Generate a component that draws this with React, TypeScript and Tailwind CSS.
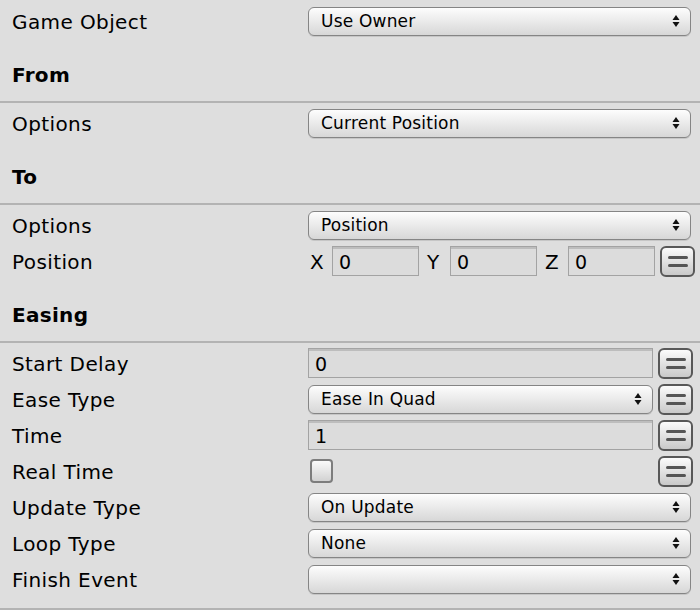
import React from 'react';

const FONT = { fontFamily: '"DejaVu Sans", "Liberation Sans", sans-serif' };

function Arrows() {
  return (
    <svg width="8" height="14" viewBox="0 0 8 14" className="shrink-0">
      <path d="M4 1 L7.5 6 L0.5 6 Z" fill="#111" />
      <path d="M4 13 L7.5 8 L0.5 8 Z" fill="#111" />
    </svg>
  );
}

function Dropdown({ value, className = 'w-[383px]' }: { value: string; className?: string }) {
  return (
    <div
      className={`${className} h-[29px] flex items-center justify-between pl-[12px] pr-[10px] rounded-[6px] border border-[#858585] bg-gradient-to-b from-[#fdfdfd] to-[#d7d7d7] shadow-[0_1px_0_#c6c6c6] text-[17px] text-black`}
    >
      <span className="leading-none pt-[1px] tracking-[0.2px]">{value}</span>
      <Arrows />
    </div>
  );
}

function Field({ value, className = 'w-[345px]' }: { value: string; className?: string }) {
  return (
    <div
      className={`${className} h-[30px] flex items-center pl-[6px] border border-[#a3a3a3] bg-[#dcdcdc] shadow-[inset_0_2px_0_#bdbdbd] text-[19px] text-black`}
    >
      <span className="leading-none pt-[2px]">{value}</span>
    </div>
  );
}

function EqButton() {
  return (
    <div className="w-[35px] h-[31px] ml-[5px] flex flex-col items-center justify-center gap-[5px] rounded-[6px] border-2 border-[#585858] bg-gradient-to-b from-[#fbfbfb] to-[#c9c9c9]">
      <div className="w-[20px] h-[3px] rounded-full bg-[#555]" />
      <div className="w-[20px] h-[3px] rounded-full bg-[#555]" />
    </div>
  );
}

function Row({ label, children }: { label: string; children: React.ReactNode }) {
  return (
    <div className="h-[30px] flex items-center">
      <div className="w-[308px] pl-[12px] pt-[2px] text-[20px] tracking-[0.4px] text-black leading-none">{label}</div>
      <div className="flex items-center">{children}</div>
    </div>
  );
}

function Header({ title }: { title: string }) {
  return (
    <div className="h-[61px] pt-[21px] pl-[12px] border-b-2 border-[#b3b3b3] text-[20px] font-bold tracking-[0.3px] text-black leading-[24px]">
      {title}
    </div>
  );
}

function Body({ children }: { children: React.ReactNode }) {
  return <div className="pt-[5px] flex flex-col gap-[6px]">{children}</div>;
}

export default function App() {
  return (
    <div className="w-[700px] h-[610px] bg-[#dedede] pt-[6px] overflow-hidden" style={FONT}>
      <Row label="Game Object">
        <Dropdown value="Use Owner" />
      </Row>

      <div className="mt-[6px]">
        <Header title="From" />
        <Body>
          <Row label="Options">
            <Dropdown value="Current Position" />
          </Row>
        </Body>
      </div>

      <div className="mt-[6px]">
        <Header title="To" />
        <Body>
          <Row label="Options">
            <Dropdown value="Position" />
          </Row>
          <Row label="Position">
            <span className="w-[24px] pl-[2px] pt-[2px] text-[20px] leading-none">X</span>
            <Field value="0" className="w-[87px]" />
            <span className="w-[31px] pl-[8px] pt-[2px] text-[20px] leading-none">Y</span>
            <Field value="0" className="w-[87px]" />
            <span className="w-[31px] pl-[8px] pt-[2px] text-[20px] leading-none">Z</span>
            <Field value="0" className="w-[87px]" />
            <EqButton />
          </Row>
        </Body>
      </div>

      <div className="mt-[6px]">
        <Header title="Easing" />
        <Body>
          <Row label="Start Delay">
            <Field value="0" />
            <EqButton />
          </Row>
          <Row label="Ease Type">
            <Dropdown value="Ease In Quad" className="w-[345px]" />
            <EqButton />
          </Row>
          <Row label="Time">
            <Field value="1" />
            <EqButton />
          </Row>
          <Row label="Real Time">
            <div className="w-[345px] flex items-center">
              <div className="ml-[2px] w-[23px] h-[24px] rounded-[4px] border-2 border-[#7d7d7d] bg-gradient-to-b from-[#fafafa] to-[#d2d2d2]" />
            </div>
            <EqButton />
          </Row>
          <Row label="Update Type">
            <Dropdown value="On Update" />
          </Row>
          <Row label="Loop Type">
            <Dropdown value="None" />
          </Row>
          <Row label="Finish Event">
            <Dropdown value="" />
          </Row>
        </Body>
        <div className="mt-[14px] border-b-2 border-[#b3b3b3]" />
      </div>
    </div>
  );
}
